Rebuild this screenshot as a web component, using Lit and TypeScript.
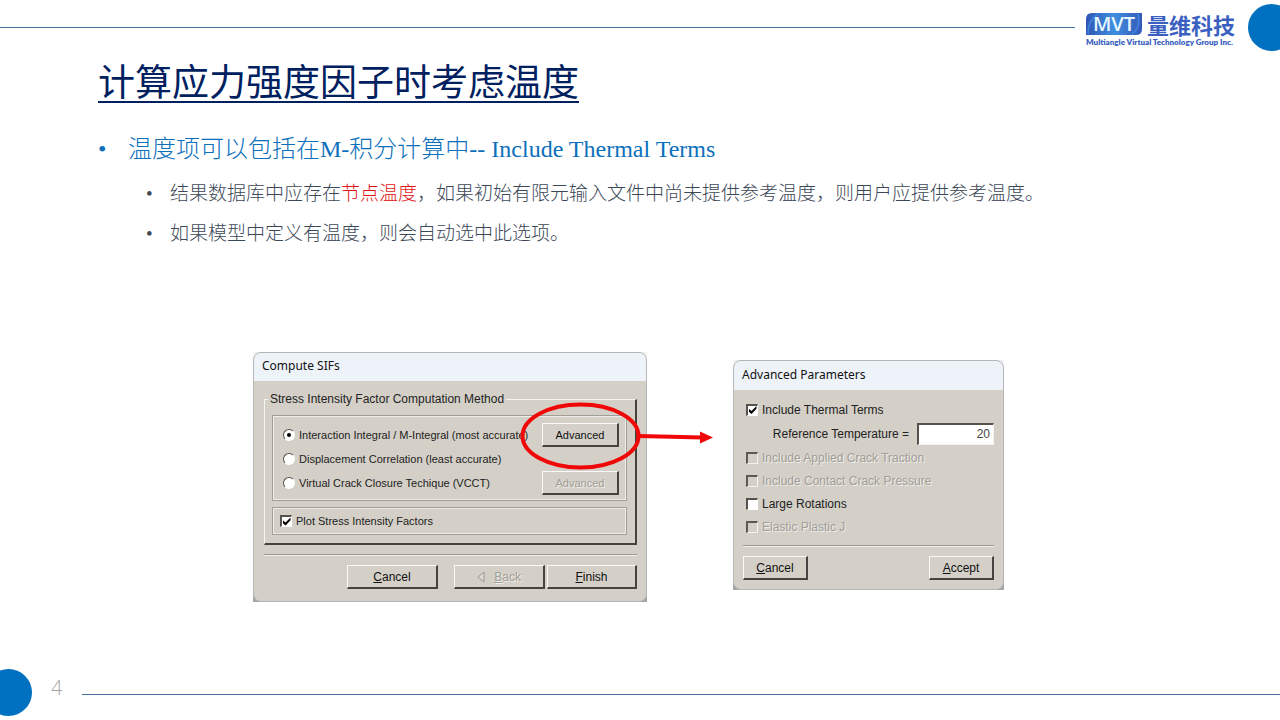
import { LitElement, html, css, svg } from "lit";
import { customElement, property } from "lit/decorators.js";

@customElement("brand-logo")
export class BrandLogo extends LitElement {
  static styles = css`
    :host {
      display: block;
      color: #3a5fc0;
    }
    .top {
      display: flex;
      align-items: center;
      gap: 5px;
      height: 24px;
    }
    .mark {
      display: block;
      width: 56px;
      height: 24px;
      overflow: visible;
    }
    .mark text {
      font-family: "Open Sans", sans-serif;
      font-size: 20px;
      font-weight: 600;
    }
    .name {
      font-family: "Noto Sans CJK SC", sans-serif;
      font-size: 22px;
      font-weight: 700;
      line-height: 24px;
      white-space: nowrap;
    }
    .sub {
      font-family: Lato, sans-serif;
      font-size: 8px;
      font-weight: 800;
      line-height: 12px;
      white-space: nowrap;
    }
  `;

  render() {
    return html`
      <div class="top">
        <svg class="mark" viewBox="0 0 56 24" aria-label="MVT">
          <defs>
            <linearGradient id="g" x1="0" x2="1" y1="0" y2="0">
              <stop offset="0" stop-color="#2f55b4" />
              <stop offset="0.5" stop-color="#3f8fe0" />
              <stop offset="1" stop-color="#3558b8" />
            </linearGradient>
          </defs>
          <path d="M6 1H56V17Q56 23 50 23H0V7Q0 1 6 1Z" fill="url(#g)" />
          <path d="M2 22Q2 8 12 2M46 22Q55 16 52 2" fill="none" stroke="#3f7fd8" stroke-width="2" />
          <text x="28" y="19" text-anchor="middle" fill="#e6f7ff">MVT</text>
        </svg>
        <span class="name">量维科技</span>
      </div>
      <div class="sub">Multiangle Virtual Technology Group Inc.</div>
    `;
  }
}

const controls = css`
  * {
    box-sizing: border-box;
  }
  .shade {
    background: linear-gradient(#f1f1f1 50%, #a5a5a5 50%);
  }
  .window {
    border: 1px solid #b4b6b8;
    border-radius: 8px;
    overflow: hidden;
    background: #d4d0c8;
    color: #222;
    font: 12px/16px "Liberation Sans", Arial, sans-serif;
  }
  .caption {
    margin: 0;
    padding: 0 8px 2px;
    background: #eef3f9;
    color: #111;
    font: 400 12px/26px "Noto Sans", sans-serif;
  }
  label {
    white-space: nowrap;
  }
  .option {
    display: flex;
    align-items: center;
    gap: 4px;
  }
  .option.off {
    color: #a09d97;
    text-shadow: 1px 1px #f0eeea;
  }
  .box,
  .radio {
    appearance: none;
    flex: none;
    display: grid;
    place-items: center;
    width: 12px;
    height: 12px;
    margin: 0;
    background: #fff;
    border: 1px solid;
    border-color: #55524e #fff #fff #55524e;
  }
  .box {
    border-width: 2px 1px 1px 2px;
  }
  .box:disabled {
    background: #d4d0c8;
    border-color: #5c5955 #f4f2ee #f4f2ee #5c5955;
  }
  .box:checked::before {
    content: "";
    width: 8px;
    height: 8px;
    background: #000;
    clip-path: polygon(0 30%, 38% 62%, 100% 0, 100% 35%, 38% 100%, 0 68%);
  }
  .radio {
    border-radius: 50%;
  }
  .radio:checked::before {
    content: "";
    width: 4px;
    height: 4px;
    border-radius: 50%;
    background: #000;
  }
  .rule {
    height: 2px;
    margin: 0;
    border: 0;
    border-top: 1px solid #9a9792;
    background: #f2f0ec;
  }
  button {
    height: 24px;
    padding: 0;
    background: #d4d0c8;
    color: #111;
    border: 1px solid;
    border-width: 1px 2px 2px 1px;
    border-color: #fbfaf8 #45423f #45423f #fbfaf8;
    font: inherit;
  }
  button:disabled {
    color: #a09d97;
    text-shadow: 1px 1px #f0eeea;
  }
`;

@customElement("sif-window")
export class SifWindow extends LitElement {
  static styles = [
    controls,
    css`
      :host {
        display: block;
      }
      .body {
        padding: 11px 9px 12px 10px;
      }
      .method {
        margin: 0;
        min-width: 0;
        padding: 8px 8px 8px 7px;
        border: 1px solid;
        border-width: 1px 2px 2px 1px;
        border-color: #f7f5f2 #45423f #45423f #f7f5f2;
        font-size: 11px;
      }
      .method legend {
        margin-left: -4px;
        padding: 0 2px;
        font-size: 12px;
        line-height: 15px;
      }
      .group {
        border: 1px solid #a19e98;
        outline: 1px solid #efede9;
        outline-offset: -2px;
      }
      .choices {
        display: grid;
        grid-template-columns: minmax(0, 1fr) 77px;
        grid-auto-rows: 24px;
        align-items: center;
        padding: 7px 7px 5px 10px;
      }
      .option.pick {
        grid-column: 1;
      }
      .plot {
        margin-top: 6px;
        padding: 5px 7px;
      }
      .rule {
        margin: 9px 0;
      }
      .actions {
        display: grid;
        grid-template-columns: 91px 91px 90px;
        justify-content: end;
        column-gap: 2px;
      }
      .actions button:first-child {
        margin-left: -14px;
        margin-right: 14px;
      }
      .arrow {
        width: 8px;
        height: 12px;
        margin-right: 6px;
        vertical-align: -2px;
      }
    `,
  ];

  render() {
    return html`
      <div class="shade">
        <section class="window">
          <h2 class="caption">Compute SIFs</h2>
          <div class="body">
            <fieldset class="method">
              <legend>Stress Intensity Factor Computation Method</legend>
              <div class="group choices">
                <label class="option pick">
                  <input class="radio" type="radio" name="method" checked />Interaction Integral / M-Integral (most accurate)
                </label>
                <button type="button">Advanced</button>
                <label class="option pick">
                  <input class="radio" type="radio" name="method" />Displacement Correlation (least accurate)
                </label>
                <label class="option pick">
                  <input class="radio" type="radio" name="method" />Virtual Crack Closure Techique (VCCT)
                </label>
                <button type="button" disabled>Advanced</button>
              </div>
              <div class="group plot">
                <label class="option"><input class="box" type="checkbox" checked />Plot Stress Intensity Factors</label>
              </div>
            </fieldset>
            <hr class="rule" />
            <div class="actions">
              <button type="button"><u>C</u>ancel</button>
              <button type="button" disabled>
                <svg class="arrow" viewBox="0 0 8 12">
                  <path d="M7 1V11L1 6Z" fill="#dedbd5" stroke="#99968f" />
                </svg>
                <u>B</u>ack
              </button>
              <button type="button"><u>F</u>inish</button>
            </div>
          </div>
        </section>
      </div>
    `;
  }
}

interface Option {
  label: string;
  disabled: boolean;
}

@customElement("advanced-window")
export class AdvancedWindow extends LitElement {
  @property({ attribute: false }) options: Option[] = [
    { label: "Include Applied Crack Traction", disabled: true },
    { label: "Include Contact Crack Pressure", disabled: true },
    { label: "Large Rotations", disabled: false },
    { label: "Elastic Plastic J", disabled: true },
  ];

  static styles = [
    controls,
    css`
      :host {
        display: block;
      }
      .caption {
        line-height: 27px;
      }
      .body {
        padding: 8px 9px 9px;
      }
      .option {
        height: 23px;
        padding-left: 3px;
      }
      .reference {
        display: flex;
        align-items: center;
        justify-content: flex-end;
        gap: 8px;
        height: 25px;
      }
      .value {
        width: 77px;
        height: 22px;
        padding: 0 3px;
        border: 1px solid;
        border-width: 2px 1px 1px 2px;
        border-color: #55524e #f4f2ee #f4f2ee #55524e;
        background: #fff;
        color: #444;
        font: inherit;
        text-align: right;
      }
      .rule {
        margin: 7px 0 9px;
      }
      .actions {
        display: flex;
        justify-content: space-between;
      }
      .actions button {
        width: 65px;
      }
    `,
  ];

  render() {
    return html`
      <div class="shade">
        <section class="window">
          <h2 class="caption">Advanced Parameters</h2>
          <div class="body">
            <label class="option"><input class="box" type="checkbox" checked />Include Thermal Terms</label>
            <div class="reference">
              <label for="reference">Reference Temperature =</label>
              <input class="value" id="reference" type="text" value="20" />
            </div>
            ${this.options.map(
              (o) => html`
                <label class="option ${o.disabled ? "off" : ""}">
                  <input class="box" type="checkbox" ?disabled=${o.disabled} />${o.label}
                </label>
              `,
            )}
            <hr class="rule" />
            <div class="actions">
              <button type="button"><u>C</u>ancel</button>
              <button type="button"><u>A</u>ccept</button>
            </div>
          </div>
        </section>
      </div>
    `;
  }
}

@customElement("app-root")
export class AppRoot extends LitElement {
  static styles = css`
    :host {
      display: flex;
      flex-direction: column;
      box-sizing: border-box;
      min-height: 100vh;
      padding: 4px 0;
      overflow: hidden;
      background: #fff;
    }
    .bar {
      display: flex;
      align-items: center;
      height: 47px;
    }
    .line {
      flex: 1;
      height: 1px;
      background: #44709a;
    }
    .dot {
      flex: none;
      width: 47px;
      height: 47px;
      border-radius: 50%;
      background: #0070c0;
    }
    .logo {
      margin: 0 10px 0 11px;
      padding-top: 5px;
      width: 152px;
    }
    header .dot {
      margin-right: -15px;
    }
    footer .dot {
      margin-left: -15px;
    }
    footer .line {
      margin-top: 3px;
    }
    .page {
      width: 50px;
      box-sizing: border-box;
      padding: 0 0 9px 19px;
      color: #a6a6a6;
      font: 300 20px/24px "Open Sans", sans-serif;
    }
    main {
      flex: 1;
      padding: 5px 98px 0;
    }
    h1 {
      margin: 0;
      color: #002060;
      font: 400 37px/48px "Noto Sans CJK SC", sans-serif;
      text-decoration: underline;
      text-decoration-thickness: 2px;
      text-decoration-skip-ink: none;
      text-underline-offset: 5px;
    }
    ul {
      margin: 0;
      padding: 0;
      list-style: none;
    }
    li::before {
      content: "•";
      flex: none;
    }
    .lead,
    .points li {
      display: flex;
      font-family: "Liberation Serif", "Noto Sans CJK SC", serif;
      font-weight: 300;
    }
    .lead {
      color: #0c70bb;
      font-size: 24px;
      line-height: 36px;
      margin-top: 27px;
    }
    .lead::before {
      width: 30px;
    }
    .points {
      padding: 7px 0 0 48px;
    }
    .points li {
      color: #3c4857;
      font-size: 19px;
      line-height: 40px;
    }
    .points li::before {
      width: 24px;
    }
    .hot {
      color: #e01414;
    }
    .figure {
      position: relative;
      display: flex;
      align-items: flex-start;
      gap: 86px;
      margin: 98px 0 0 155px;
    }
    .sif {
      flex: none;
      width: 394px;
    }
    .advanced {
      flex: none;
      width: 271px;
      margin-top: 8px;
    }
    .callout {
      position: absolute;
      left: 266px;
      top: 49px;
      width: 196px;
      height: 70px;
      pointer-events: none;
    }
  `;

  render() {
    return html`
      <header class="bar">
        <span class="line"></span>
        <brand-logo class="logo"></brand-logo>
        <span class="dot"></span>
      </header>
      <main>
        <h1>计算应力强度因子时考虑温度</h1>
        <ul>
          <li class="lead">温度项可以包括在M-积分计算中-- Include Thermal Terms</li>
        </ul>
        <ul class="points">
          <li><span>结果数据库中应存在<span class="hot">节点温度</span>，如果初始有限元输入文件中尚未提供参考温度，则用户应提供参考温度。</span></li>
          <li>如果模型中定义有温度，则会自动选中此选项。</li>
        </ul>
        <div class="figure">
          <sif-window class="sif"></sif-window>
          <advanced-window class="advanced"></advanced-window>
          <svg class="callout" viewBox="0 0 196 70" aria-hidden="true">
            ${svg`
              <ellipse cx="61.500" cy="35" rx="58" ry="31.500" fill="none" stroke="#f00808" stroke-width="4" />
              <path d="M120 35L183 36.500" stroke="#f00808" stroke-width="4" />
              <path d="M181 30.500L194 36.500L181 42.500Z" fill="#f00808" />
            `}
          </svg>
        </div>
      </main>
      <footer class="bar">
        <span class="dot"></span>
        <span class="page">4</span>
        <span class="line"></span>
      </footer>
    `;
  }
}
